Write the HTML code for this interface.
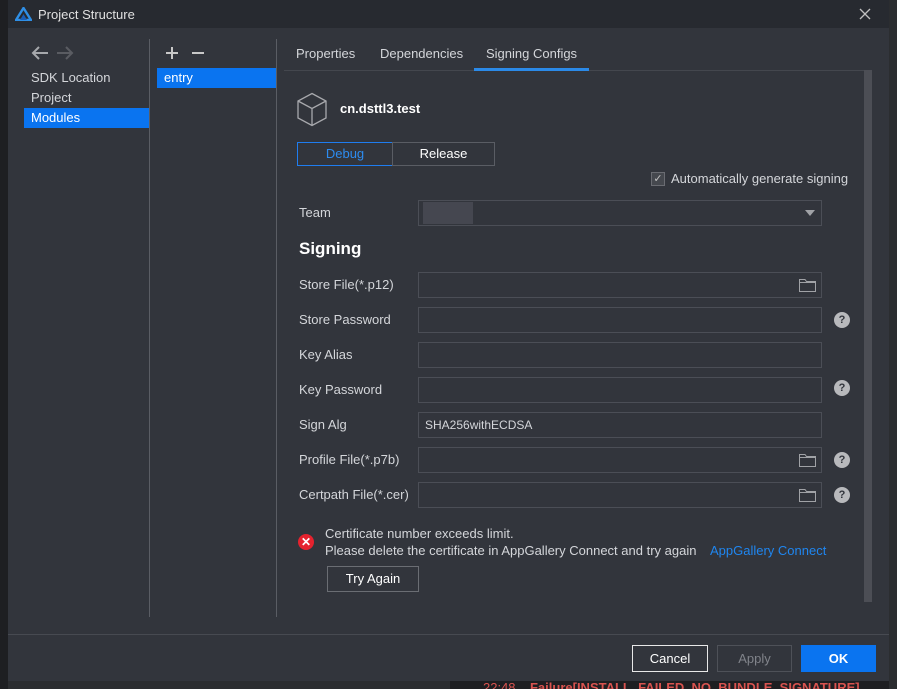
<!DOCTYPE html>
<html><head><style>
*{margin:0;padding:0;box-sizing:border-box}
html,body{width:897px;height:689px;overflow:hidden}
body{background:#2b2d30;font-family:"Liberation Sans",sans-serif;font-size:13px;color:#d4d6da;position:relative}
.a{position:absolute}
.dlg{left:8px;top:0;width:881px;height:681px;background:#32353c}
.inp{position:absolute;left:418px;width:404px;height:26px;border:1px solid #4b4e56}
.lbl{position:absolute;left:299px;font-size:13px}
.q{position:absolute;left:834px;width:16px;height:16px;border-radius:50%;background:#b8b9bc;color:#32353c;font-size:11px;font-weight:bold;text-align:center;line-height:16px}
.fold{position:absolute;left:799px}
</style></head><body>
<div class="a" style="left:0;top:0;width:8px;height:689px;background:#1e1f22"></div>
<div class="a" style="left:450px;top:681px;width:439px;height:8px;background:#1e1f22"></div>
<div class="a dlg"></div>
<div class="a" style="left:8px;top:0;width:881px;height:28px;background:#272a30"></div>
<svg class="a" style="left:15px;top:7px" width="17" height="14" viewBox="0 0 17 14"><path d="M8.5 1 L16 13 H1 Z" fill="none" stroke="#2f8fe6" stroke-width="2.4"/><path d="M5 13 L8.5 7 L12 13" fill="#1a5fb8"/></svg>
<div class="a" style="left:38px;top:7px;font-size:13px;color:#e0e0e0">Project Structure</div>
<svg class="a" style="left:859px;top:8px" width="12" height="12"><path d="M1 1 L11 11 M11 1 L1 11" stroke="#c0c0c0" stroke-width="1.3"/></svg>
<svg class="a" style="left:31px;top:45px" width="18" height="16"><path d="M17 8 H2 M8 2 L2 8 L8 14" fill="none" stroke="#a6a8ac" stroke-width="2"/></svg>
<svg class="a" style="left:56px;top:45px" width="18" height="16"><path d="M1 8 H16 M10 2 L16 8 L10 14" fill="none" stroke="#5a5c62" stroke-width="2"/></svg>
<div class="a" style="left:31px;top:70px">SDK Location</div>
<div class="a" style="left:31px;top:90px">Project</div>
<div class="a" style="left:24px;top:108px;width:125px;height:20px;background:#0a74f0"></div>
<div class="a" style="left:31px;top:110px;color:#fff">Modules</div>
<div class="a" style="left:149px;top:39px;width:1px;height:578px;background:#5a5d64"></div>
<div class="a" style="left:276px;top:39px;width:1px;height:578px;background:#5a5d64"></div>
<svg class="a" style="left:166px;top:47px" width="12" height="12"><path d="M6 0 V12 M0 6 H12" stroke="#c8c8c8" stroke-width="2"/></svg>
<svg class="a" style="left:192px;top:47px" width="12" height="12"><path d="M0 6 H12" stroke="#c8c8c8" stroke-width="2"/></svg>
<div class="a" style="left:157px;top:68px;width:119px;height:20px;background:#0a74f0"></div>
<div class="a" style="left:164px;top:70px;color:#fff">entry</div>
<div class="a" style="left:296px;top:46px">Properties</div>
<div class="a" style="left:380px;top:46px">Dependencies</div>
<div class="a" style="left:486px;top:46px">Signing Configs</div>
<div class="a" style="left:284px;top:70px;width:580px;height:1px;background:#44474e"></div>
<div class="a" style="left:474px;top:68px;width:115px;height:3px;background:#2b8ae8"></div>
<div class="a" style="left:864px;top:70px;width:8px;height:532px;background:#4c4e55"></div>
<svg class="a" style="left:296px;top:92px" width="32" height="35" viewBox="0 0 32 35"><path d="M16 1.5 L30 9 V26 L16 33.5 L2 26 V9 Z M2 9 L16 16.5 L30 9 M16 16.5 V33.5" fill="none" stroke="#a8a9ad" stroke-width="1.3"/></svg>
<div class="a" style="left:340px;top:101px;font-weight:bold;color:#fff">cn.dsttl3.test</div>
<div class="a" style="left:297px;top:142px;width:96px;height:24px;border:1px solid #1f7df0;color:#2d8cf0;text-align:center;line-height:22px">Debug</div>
<div class="a" style="left:392px;top:142px;width:103px;height:24px;border:1px solid #5a5d64;color:#fff;text-align:center;line-height:22px">Release</div>
<div class="a" style="left:651px;top:172px;width:14px;height:14px;border:1px solid #6a6c72;background:#45484e;color:#c0c0c0;font-size:11px;line-height:12px;text-align:center">✓</div>
<div class="a" style="left:671px;top:171px">Automatically generate signing</div>
<div class="lbl" style="top:205px">Team</div>
<div class="inp" style="top:200px"></div>
<div class="a" style="left:423px;top:202px;width:50px;height:22px;background:#4d5058;opacity:.7"></div>
<div class="a" style="left:805px;top:210px;width:0;height:0;border-left:5px solid transparent;border-right:5px solid transparent;border-top:6px solid #a0a2a6"></div>
<div class="a" style="left:299px;top:239px;font-size:17px;font-weight:bold;color:#fff">Signing</div>
<div class="lbl" style="top:277px">Store File(*.p12)</div><div class="inp" style="top:272px"></div>
<div class="lbl" style="top:312px">Store Password</div><div class="inp" style="top:307px"></div><div class="q" style="top:312px">?</div>
<div class="lbl" style="top:347px">Key Alias</div><div class="inp" style="top:342px"></div>
<div class="lbl" style="top:382px">Key Password</div><div class="inp" style="top:377px"></div><div class="q" style="top:380px">?</div>
<div class="lbl" style="top:417px">Sign Alg</div><div class="inp" style="top:412px"></div>
<div class="a" style="left:425px;top:418px;font-size:12px">SHA256withECDSA</div>
<div class="lbl" style="top:452px">Profile File(*.p7b)</div><div class="inp" style="top:447px"></div><div class="q" style="top:452px">?</div>
<div class="lbl" style="top:487px">Certpath File(*.cer)</div><div class="inp" style="top:482px"></div><div class="q" style="top:487px">?</div>
<svg class="fold" style="top:279px" width="17" height="13"><path d="M0.5 0.5 H6 L7.5 2.5 H16.5 V12.5 H0.5 Z M0.5 3.5 H16.5" fill="none" stroke="#a0a2a6"/></svg>
<svg class="fold" style="top:454px" width="17" height="13"><path d="M0.5 0.5 H6 L7.5 2.5 H16.5 V12.5 H0.5 Z M0.5 3.5 H16.5" fill="none" stroke="#a0a2a6"/></svg>
<svg class="fold" style="top:489px" width="17" height="13"><path d="M0.5 0.5 H6 L7.5 2.5 H16.5 V12.5 H0.5 Z M0.5 3.5 H16.5" fill="none" stroke="#a0a2a6"/></svg>
<div class="a" style="left:298px;top:534px;width:16px;height:16px;border-radius:50%;background:#e5222e;color:#fff;font-size:12px;font-weight:bold;text-align:center;line-height:16px">✕</div>
<div class="a" style="left:325px;top:526px">Certificate number exceeds limit.</div>
<div class="a" style="left:325px;top:543px">Please delete the certificate in AppGallery Connect and try again</div>
<div class="a" style="left:710px;top:543px;color:#1f86f0">AppGallery Connect</div>
<div class="a" style="left:327px;top:566px;width:92px;height:26px;border:1px solid #6a6d73;color:#fff;text-align:center;line-height:24px">Try Again</div>
<div class="a" style="left:8px;top:634px;width:881px;height:1px;background:#474a51"></div>
<div class="a" style="left:632px;top:645px;width:76px;height:27px;border:1px solid #e8e8e8;color:#fff;text-align:center;line-height:25px">Cancel</div>
<div class="a" style="left:717px;top:645px;width:75px;height:27px;border:1px solid #4e5158;color:#80838a;text-align:center;line-height:25px">Apply</div>
<div class="a" style="left:801px;top:645px;width:75px;height:27px;background:#0a74f0;color:#fff;font-weight:bold;text-align:center;line-height:27px">OK</div>
<div class="a" style="left:483px;top:680px;font-size:13px;color:#d9534f;white-space:nowrap">22:48 &nbsp;&nbsp; <b>Failure[INSTALL_FAILED_NO_BUNDLE_SIGNATURE]</b></div>
</body></html>
